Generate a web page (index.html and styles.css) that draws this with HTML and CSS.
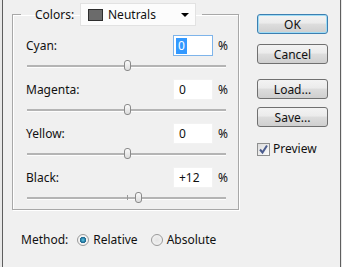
FILE: index.html
```html
<!DOCTYPE html>
<html lang="en">

<head>
  <meta charset='utf-8'>
  <title>Selective Color</title>
  <meta name='viewport' content='width=device-width, initial-scale=1'>
  <link rel="stylesheet" href="styles.css">
</head>

<body>
  <div id="window">
    <div id="mainCol">
      <fieldset id="colorGroup">
        <legend id="groupLegend">
          <span class="legendLabel">Colors:</span>
          <div id="colorSelect">
            <span id="swatch"></span>
            <span class="selectText">Neutrals</span>
            <span class="arrow"></span>
          </div>
        </legend>

        <div class="channel">
          <div class="channelRow">
            <span class="channelName">Cyan:</span>
            <div class="field focused"><span class="selected">0</span></div>
            <span class="pct">%</span>
          </div>
          <div class="track">
            <span class="tick"></span>
            <span class="thumb" style="left: 50%;"></span>
          </div>
        </div>

        <div class="channel">
          <div class="channelRow">
            <span class="channelName">Magenta:</span>
            <div class="field">0</div>
            <span class="pct">%</span>
          </div>
          <div class="track">
            <span class="tick"></span>
            <span class="thumb" style="left: 50%;"></span>
          </div>
        </div>

        <div class="channel">
          <div class="channelRow">
            <span class="channelName">Yellow:</span>
            <div class="field">0</div>
            <span class="pct">%</span>
          </div>
          <div class="track">
            <span class="tick"></span>
            <span class="thumb" style="left: 50%;"></span>
          </div>
        </div>

        <div class="channel">
          <div class="channelRow">
            <span class="channelName">Black:</span>
            <div class="field">+12</div>
            <span class="pct">%</span>
          </div>
          <div class="track">
            <span class="tick"></span>
            <span class="thumb" style="left: 56%;"></span>
          </div>
        </div>
      </fieldset>

      <div id="methodRow">
        <span class="methodLabel">Method:</span>
        <span class="radio checked"></span>
        <span class="radioText">Relative</span>
        <span class="radio"></span>
        <span class="radioText">Absolute</span>
      </div>
    </div>

    <div id="sideCol">
      <button class="btn default">OK</button>
      <button class="btn cancel">Cancel</button>
      <button class="btn load">Load...</button>
      <button class="btn save">Save...</button>
      <div id="previewRow">
        <span class="checkbox">
          <svg width="11" height="11" viewBox="0 0 11 11">
            <polyline points="2,5.5 4.5,8.5 9,1.5" fill="none" stroke="#4b5c8e" stroke-width="2"/>
          </svg>
        </span>
        <span>Preview</span>
      </div>
    </div>
  </div>
</body>

</html>
```

FILE: styles.css
```css
* {
  box-sizing: border-box;
  font-family: "Noto Sans", "Open Sans", sans-serif;
}

body {
  margin: 0;
  background-color: #e8e8e8;
  color: #111;
  font-size: 12px;
  line-height: 16px;
}

#window {
  display: flex;
  margin-left: 2px;
  width: 339px;
  height: 267px;
  padding-top: 3px;
  background-color: #f0f0f0;
  border-left: 1px solid #5e5e5e;
  border-right: 1px solid #5e5e5e;
}

#mainCol {
  display: flex;
  flex-direction: column;
  margin-left: 9px;
}

#colorGroup {
  width: 227px;
  margin: 0;
  padding: 9px 10px 6px 13px;
  border: 1px solid #a8a8a8;
  box-shadow: 1px 1px 0 #fff, inset 1px 1px 0 #fff;
}

#groupLegend {
  display: flex;
  align-items: center;
  margin-left: -5px;
  padding: 0 6px 0 14px;
}

.legendLabel {
  width: 45px;
}

#colorSelect {
  display: flex;
  align-items: center;
  width: 116px;
  height: 23px;
  padding: 0 3px 0 7px;
  background-color: #fcfcfc;
  border: 1px solid #e2e2e2;
}

#swatch {
  width: 15px;
  height: 12px;
  background-color: #6b6b6b;
  border: 1px solid #2e2e2e;
}

.selectText {
  flex: 1;
  margin-left: 5px;
}

.arrow {
  width: 0;
  height: 0;
  margin-right: 3px;
  border-left: 4px solid transparent;
  border-right: 4px solid transparent;
  border-top: 4px solid #000;
}

.channel {
  display: flex;
  flex-direction: column;
  gap: 4px;
}

.channel + .channel {
  margin-top: 8px;
}

.channelRow {
  display: flex;
  align-items: center;
}

.channelName {
  flex: 1;
}

.field {
  width: 40px;
  height: 21px;
  padding: 2px 0 0 5px;
  background-color: #fff;
  border: 1px solid #f2f2f2;
}

.field.focused {
  border-color: #7eb4ea;
  padding-left: 2px;
}

.selected {
  display: inline-block;
  padding: 0 2px;
  background-color: #3399ff;
  color: #fff;
}

.pct {
  width: 10px;
  margin-left: 5px;
}

.track {
  position: relative;
  height: 11px;
  margin: 0 2px 0 1px;
}

.track::before {
  content: "";
  position: absolute;
  left: 0;
  right: 0;
  top: 5px;
  height: 2px;
  background-color: #b4b4b4;
  border-bottom: 1px solid #fdfdfd;
}

.tick {
  position: absolute;
  left: 50%;
  top: 3px;
  width: 1px;
  height: 5px;
  background-color: #9a9a9a;
}

.thumb {
  position: absolute;
  top: 0;
  width: 7px;
  height: 11px;
  margin-left: -3px;
  background: linear-gradient(#fbfbfb, #dcdcdc);
  border: 1px solid #8a8a8a;
  border-radius: 3px 3px 3px 3px;
}

#methodRow {
  display: flex;
  align-items: center;
  margin: 22px 0 0 9px;
}

.radio {
  width: 12px;
  height: 12px;
  margin: 0 4px 0 9px;
  border: 1px solid #9a9a9a;
  border-radius: 50%;
  background: radial-gradient(circle, #e4e4e4 0, #f6f6f6 100%);
}

.radio.checked {
  background: radial-gradient(circle, #5ec8e8 0, #1f6f96 2.5px, #2b6e95 3px, #f2f2f2 3.5px);
}

.radioText + .radio {
  margin-left: 13px;
}

#sideCol {
  display: flex;
  flex-direction: column;
  margin-left: 18px;
  padding-top: 11px;
}

.btn {
  width: 71px;
  height: 20px;
  padding: 0;
  font-size: 12px;
  color: #111;
  background: linear-gradient(#f3f3f3 0, #ebebeb 45%, #dddddd 50%, #cfcfcf 100%);
  border: 1px solid #707070;
  border-radius: 3px;
}

.btn.default {
  border-color: #3c7fb1;
  box-shadow: inset 0 0 0 1px #9fdcf5;
}

.cancel {
  margin-top: 10px;
}

.load {
  margin-top: 15px;
}

.save {
  margin-top: 8px;
}

#previewRow {
  display: flex;
  align-items: center;
  gap: 3px;
  margin-top: 14px;
}

.checkbox {
  display: flex;
  align-items: center;
  justify-content: center;
  width: 13px;
  height: 13px;
  border: 1px solid #8e8f8f;
  background: linear-gradient(135deg, #dcdcdc, #fcfcfc);
}
```
